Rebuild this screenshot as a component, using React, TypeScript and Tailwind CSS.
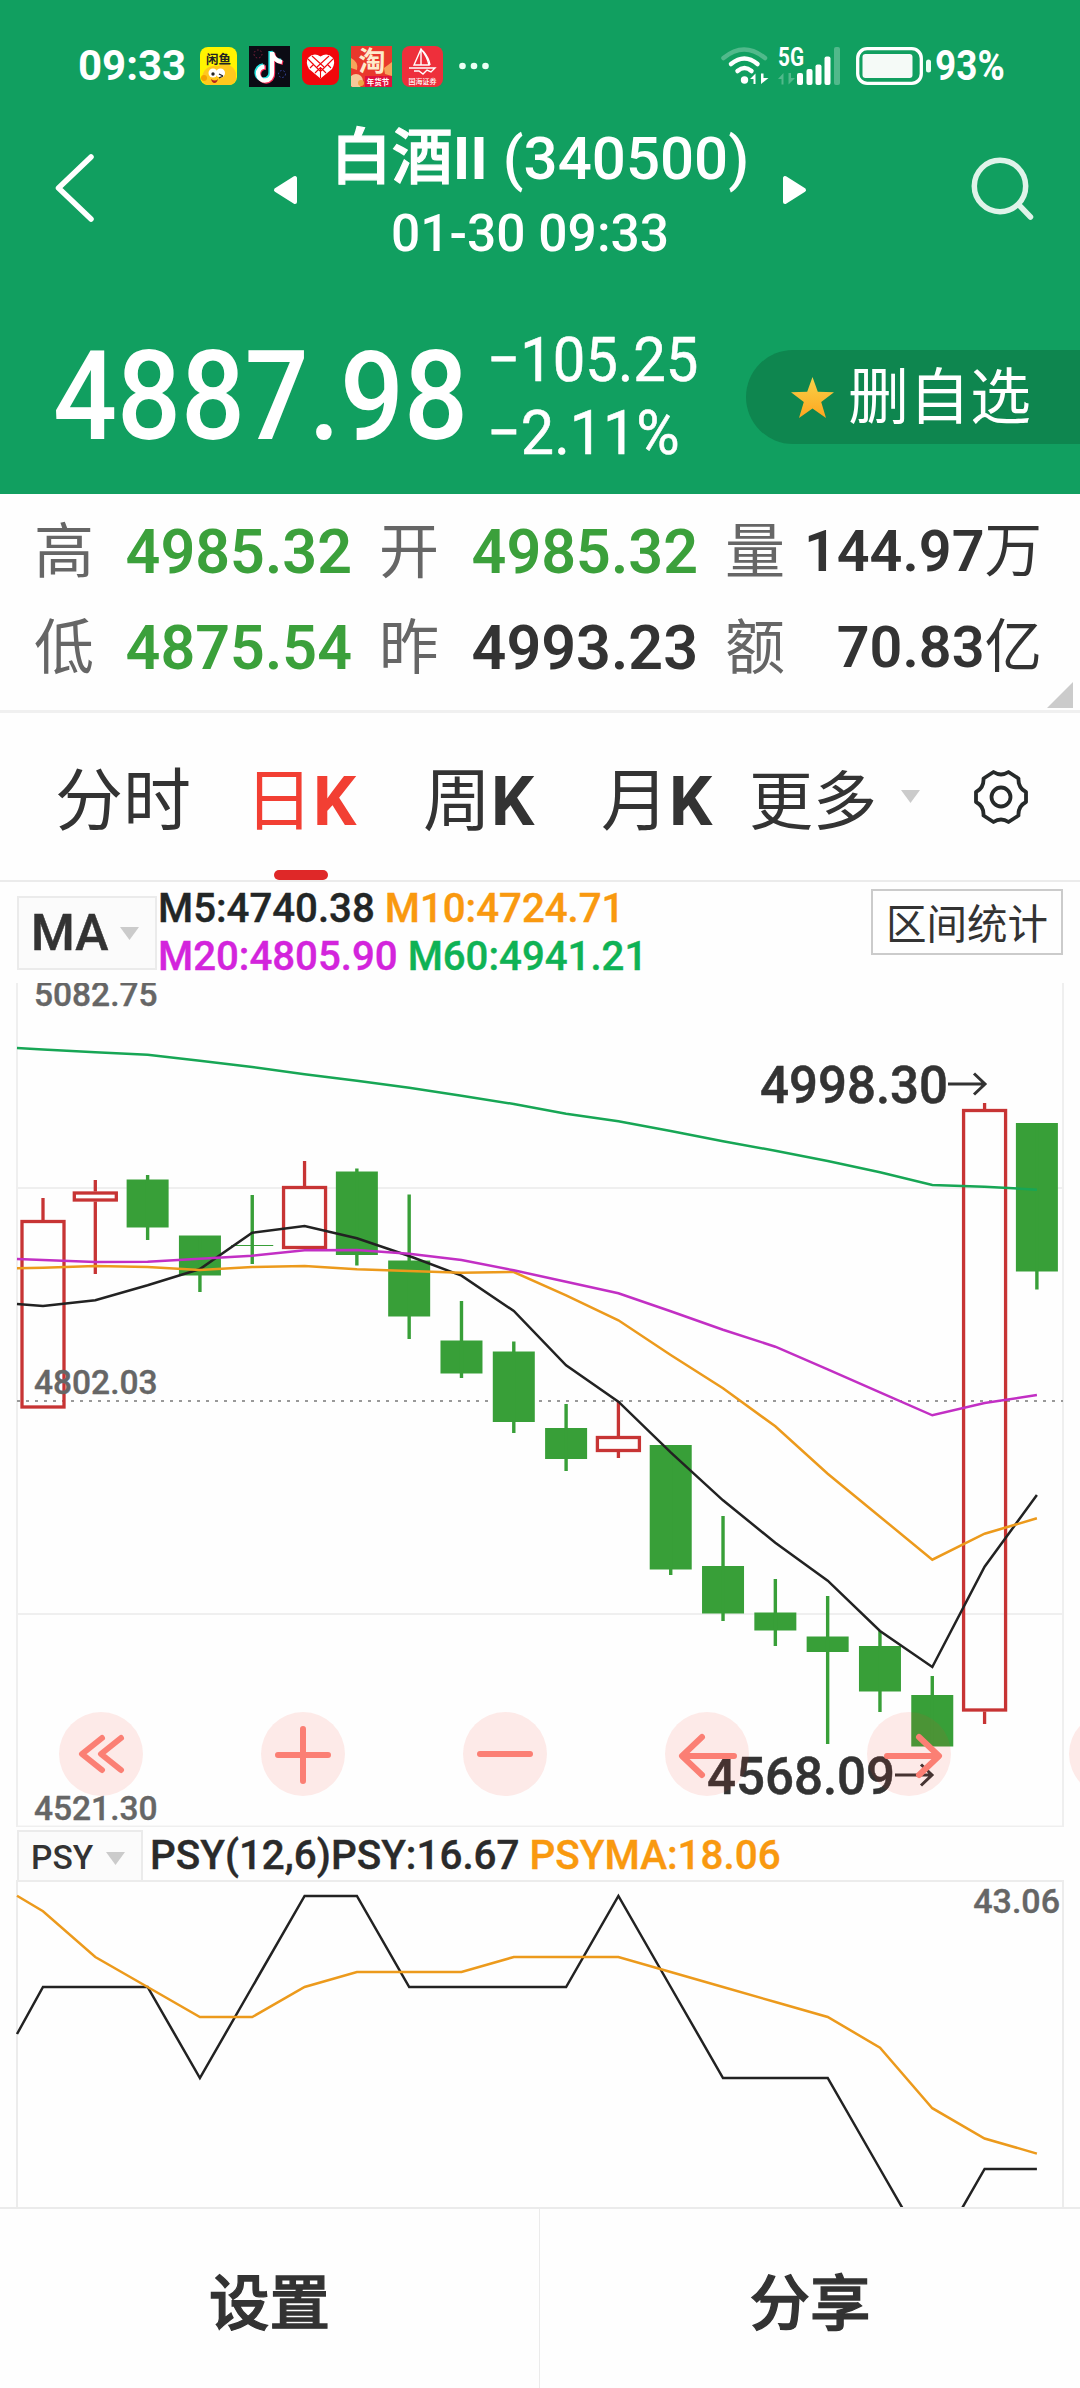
import type { ReactNode } from "react";

const GREEN = "#389f38";
const RED = "#c73434";

// x of candle i; the first one sits at 43
const cx = (i: number) => 43 + i * 52.31;

// up, high, body top, body bottom, low (chart pixels)
const CANDLES: [boolean, number, number, number, number][] = [
  [true, 1198, 1220, 1408.5, 1408],
  [true, 1180, 1191.5, 1201.5, 1274],
  [false, 1175, 1179.5, 1227.5, 1240],
  [false, 1236, 1235.5, 1275.5, 1292],
  [false, 1195, 1245, 1246, 1264],
  [true, 1161, 1186, 1249, 1249],
  [false, 1168.5, 1171.5, 1255, 1265.5],
  [false, 1194.5, 1260.5, 1316.5, 1339],
  [false, 1301, 1340.5, 1373.5, 1378],
  [false, 1341.5, 1351.5, 1422, 1433],
  [false, 1404, 1428, 1459, 1471],
  [true, 1401, 1436, 1452, 1458],
  [false, 1445, 1445, 1569.5, 1575],
  [false, 1516, 1566, 1613.5, 1621],
  [false, 1579, 1612.5, 1630.5, 1646],
  [false, 1596, 1636.5, 1652, 1744],
  [false, 1631, 1646, 1691.5, 1712],
  [false, 1676, 1695, 1746.5, 1746],
  [true, 1103, 1109, 1711.5, 1724],
  [false, 1123, 1123, 1271.5, 1289.5],
];

// every series starts with its value on the left edge of the chart
const MA60 = [1048, 1049.5, 1052.3, 1054.7, 1060.7, 1067, 1074.3, 1080.7, 1087.7, 1095.7, 1104, 1113.7, 1121.3, 1131, 1141.3, 1150.7, 1161, 1172.3, 1185, 1186.7, 1189.7];
const MA20 = [1259, 1260, 1262, 1261.7, 1258.7, 1255.7, 1250.3, 1250, 1253.7, 1260, 1270.3, 1281.7, 1293.3, 1311.3, 1329.7, 1346.7, 1369.3, 1392.3, 1415.3, 1403, 1395];
const MA10 = [1268.3, 1267.7, 1266, 1267, 1270, 1267, 1266, 1269.3, 1271, 1272.7, 1272, 1295.3, 1320.3, 1355, 1388.3, 1426.3, 1473.7, 1516.7, 1559.7, 1533.7, 1518.3];
const MA5 = [1304, 1306, 1300.3, 1285.3, 1269, 1232.7, 1226, 1238.3, 1256, 1275.7, 1311, 1365.3, 1401.7, 1452.3, 1500.3, 1542.7, 1580.7, 1631, 1667, 1566.7, 1495];
const PSY = [2034, 1987, 1987, 1987, 2078, 1987, 1896, 1896, 1987, 1987, 1987, 1987, 1896, 1987, 2078, 2078, 2078, 2169, 2260, 2169, 2169];
const PSYMA = [1895.7, 1911.2, 1957, 1987, 2017, 2017, 1987, 1972, 1972, 1972, 1957, 1957, 1957, 1972, 1987, 2002, 2017, 2047.6, 2108.2, 2138.5, 2153.6];

const toPoints = (ys: number[]) =>
  ys.map((y, i) => `${i === 0 ? 17 : cx(i - 1).toFixed(1)},${y}`).join(" ");

function Line({ ys, color }: { ys: number[]; color: string }) {
  return <polyline points={toPoints(ys)} fill="none" stroke={color} strokeWidth="2.500" />;
}

function Caret() {
  return (
    <svg width="19" height="13" viewBox="0 0 19 13">
      <path d="M0 0H19L9.5 13Z" fill="#cbcbcb" />
    </svg>
  );
}

function StatusBar() {
  return (
    <div className="flex h-[132px] items-center pl-[78px] text-[42px] font-bold leading-none">
      <span className="w-[122px]">09:33</span>
      <svg width="37" height="38" viewBox="0 0 37 38">
        <rect width="37" height="38" rx="8" fill="#fff400" />
        <path d="M2 33C2 20 12 18 18 19C28 14 34 20 36 26V33Q34 38 28 38H9Q4 38 2 33Z" fill="#ffc81e" />
        <circle cx="4" cy="31" r="3" fill="#f5a300" />
        <circle cx="13" cy="26" r="4.5" fill="#fff" />
        <circle cx="20.500" cy="26" r="4.500" fill="#fff" />
        <circle cx="13" cy="27" r="1.700" fill="#222" />
        <path d="M19 27L23 29M19 31L23 29" stroke="#222" strokeWidth="1.300" />
        <path d="M11 32Q15 35 18 32Q17 36 14.500 36Q12 36 11 32Z" fill="#b3261e" />
        <text x="18.500" y="16.500" fontSize="12.500" fontWeight="700" textAnchor="middle" fill="#222">闲鱼</text>
      </svg>
      <svg className="ml-3" width="41" height="41" viewBox="0 0 41 41">
        <rect width="41" height="41" fill="#0b0b14" />
        <g stroke="#8a2340" strokeWidth="1" strokeDasharray="1.500 2">
          <circle cx="9" cy="8" r="4" fill="none" />
          <circle cx="33" cy="28" r="3.500" fill="none" stroke="#3a4aa8" />
        </g>
        <g fill="none" strokeWidth="4.300">
          <path d="M21.500 5V26A7 7 0 1 1 14 19.500M21.500 5Q22.500 14 32 15" stroke="#25e5e0" />
          <path d="M24 7V28A7 7 0 1 1 17 21.500M24 7Q25 15 34 17" stroke="#fb2c56" />
          <path d="M23 6V27A7 7 0 1 1 15.500 20.500M23 6Q24 14.500 33 16" stroke="#fff" />
        </g>
      </svg>
      <svg className="ml-3" width="37" height="38" viewBox="0 0 37 38">
        <rect width="37" height="38" rx="8" fill="#f1070c" />
        <path d="M18.500 31.500L7 22Q3 15 6.500 10.500Q12 5 18.500 9.500Q25 5 30.500 10.500Q34 15 30 22Z" fill="#fff" />
        <path d="M6 12L18 24M10 9L22 20M31 12L19 24M27 9L15 20M18.500 20V31M8 21L12 17M29 21L25 17M13 26L18 21M24 26L19 21" stroke="#f1070c" strokeWidth="1.100" />
      </svg>
      <svg className="ml-3" width="41" height="41" viewBox="0 0 41 41">
        <rect width="41" height="41" fill="#e9382c" />
        <path d="M0 12Q8 16 6 24L0 22ZM33 22L41 16V30L34 28Z" fill="#f7a35b" />
        <circle cx="5" cy="35" r="7" fill="#f6c89a" />
        <circle cx="10" cy="37" r="3" fill="#f2a544" />
        <rect x="14" y="30" width="27" height="11" fill="#e0103c" />
        <text x="21" y="25" fontSize="27" fontWeight="700" textAnchor="middle" fill="#fdebcb">淘</text>
        <text x="27" y="38.500" fontSize="7.500" fontWeight="700" textAnchor="middle" fill="#fff">年货节</text>
      </svg>
      <svg className="ml-2.5" width="41" height="41" viewBox="0 0 41 41">
        <rect width="41" height="41" rx="8" fill="#ee2f3b" />
        <g fill="none" stroke="#fff" strokeWidth="1.400">
          <path d="M19 3L12 19H27Q25 10 19 3ZM19 3V19M7 22H33L29 26L25 24L21 28L17 25H12" />
          <path d="M21 5Q27 12 28 19" />
        </g>
        <text x="20.500" y="37.500" fontSize="7" fontWeight="500" textAnchor="middle" fill="#fff">国海证券</text>
      </svg>
      <svg className="ml-4" width="30" height="8" viewBox="0 0 30 8">
        <circle cx="3.500" cy="4" r="3.300" fill="#eafff4" />
        <circle cx="15" cy="4" r="3.300" fill="#eafff4" />
        <circle cx="26.500" cy="4" r="3.300" fill="#eafff4" />
      </svg>
      <svg className="ml-[232px]" width="48" height="40" viewBox="0 0 48 40" fill="none" stroke="#fff" strokeLinecap="round">
        <path d="M2.500 12Q23 -5 44 12" strokeWidth="4.500" opacity=".27" />
        <path d="M10 18Q23.500 7 36.500 18" strokeWidth="4.500" />
        <path d="M16.500 25Q23.500 19 30.500 25" strokeWidth="4.500" />
        <circle cx="23.500" cy="34" r="3.700" fill="#fff" stroke="none" />
        <path d="M29 33L34.500 27.500V38H32.500V33ZM40 27.500V38L47.500 32H42.500V27.500Z" fill="#fff" stroke="none" />
      </svg>
      <svg className="-mt-3 ml-[9px]" width="64" height="52" viewBox="0 -12 64 52" fill="#fff">
        <text x="0" y="19.500" fontSize="26" fontWeight="700" textLength="26" lengthAdjust="spacingAndGlyphs">5G</text>
        <path d="M0 33L5.500 27V38.500H3.500V33ZM10.500 27V38.500L17 32H13V27Z" opacity=".27" />
        <rect x="19" y="27" width="6" height="12" rx="2" />
        <rect x="28.500" y="23" width="6" height="16" rx="2" />
        <rect x="37.500" y="18.500" width="6" height="20.500" rx="2" />
        <rect x="46.500" y="10.500" width="6" height="28.500" rx="2" />
        <rect x="56" y="1" width="6" height="38" rx="2" opacity=".27" />
      </svg>
      <svg className="ml-3.5" width="76" height="38" viewBox="0 0 76 38">
        <rect x="1.700" y="1.700" width="63.600" height="34.600" rx="9.500" fill="none" stroke="#fff" strokeWidth="3.300" />
        <rect x="6.500" y="7" width="50" height="24" rx="3" fill="#f5faf7" />
        <rect x="70" y="12.500" width="5" height="13" rx="2.500" fill="#eafff4" />
      </svg>
      <span className="ml-[3px] inline-block origin-left scale-x-[.88]">93%</span>
    </div>
  );
}

function Header() {
  return (
    <header className="h-[494px] bg-[#119f60] text-white">
      <StatusBar />
      <div className="flex h-[124px] items-center pl-[54px]">
        <svg className="-mt-3" width="42" height="70" viewBox="0 0 42 70">
          <path d="M37 4L4.500 35L37 66" fill="none" stroke="#fff" strokeWidth="5.500" strokeLinecap="round" strokeLinejoin="round" />
        </svg>
        <svg className="ml-[177px] -mt-2" width="24" height="30" viewBox="0 0 24 30">
          <path d="M3 15L22 3V27Z" fill="#fff" stroke="#fff" strokeWidth="4" strokeLinejoin="round" />
        </svg>
        <div className="flex w-[486px] flex-col items-center whitespace-nowrap font-medium">
          <div className="text-[60px] leading-[78px]">
            <span className="text-[61px] [-webkit-text-stroke:1.2px_white]">白酒</span>
            <span className="font-bold">II</span> (340500)
          </div>
          <div className="mr-5 text-[51.5px] leading-[72px]">01-30 09:33</div>
        </div>
        <svg className="-mt-2" width="24" height="30" viewBox="0 0 24 30">
          <path d="M21 15L2 3V27Z" fill="#fff" stroke="#fff" strokeWidth="4" strokeLinejoin="round" />
        </svg>
        <svg className="-mt-3 ml-[164px]" width="64" height="64" viewBox="0 0 64 64" fill="none" stroke="#dff3e9" strokeWidth="5.500" strokeLinecap="round">
          <circle cx="29" cy="30" r="25.700" />
          <path d="M48 49L59.500 61" />
        </svg>
      </div>
      <div className="mt-[72px] flex h-[136px] items-center">
        <div className="w-[437px] shrink-0 pl-[53px] text-[125px] font-medium leading-none">
          <span className="inline-block origin-left scale-x-[.9]">4887.98</span>
        </div>
        <div className="w-[309px] shrink-0 pl-[50px] text-[62px] leading-[73px]">
          <div className="origin-left scale-x-[.935] whitespace-nowrap [-webkit-text-stroke:.6px_white]">−105.25</div>
          <div className="origin-left scale-x-[.955] whitespace-nowrap [-webkit-text-stroke:.6px_white]">−2.11%</div>
        </div>
        <div className="mt-0.5 flex h-[94px] flex-1 items-center rounded-l-full bg-[#0e864f] pl-[45px] text-[61px] leading-none">
          <svg width="43" height="41" viewBox="0 0 43 41">
            <defs>
              <linearGradient id="star" x2="0" y2="1">
                <stop offset="0" stopColor="#f7d34a" />
                <stop offset="1" stopColor="#ffa51f" />
              </linearGradient>
            </defs>
            <path d="M21.500 0L26.800 14.800L43 15.200L30.200 24.900L35 41L21.500 31.500L8 41L12.800 24.900L0 15.200L16.200 14.800Z" fill="url(#star)" />
          </svg>
          <span className="ml-3.5 mt-0.5">删自选</span>
        </div>
      </div>
    </header>
  );
}

function Stat({ label, children, tone }: { label: string; children: ReactNode; tone: string }) {
  return (
    <div className="flex items-center justify-between">
      <span className="mt-0.5 text-[60px] text-[#666]">{label}</span>
      <span className={tone}>{children}</span>
    </div>
  );
}

function Stats() {
  const up = "text-[61px] font-semibold text-[#3ba03b]";
  const flat = "text-[61px] font-semibold text-[#333]";
  const sum = "text-[57.5px] font-semibold text-[#333]";
  return (
    <div className="relative grid h-[219px] grid-cols-[318px_319px_317px] grid-rows-[96px_96px] gap-x-[27px] border-b-3 border-[#f0f0f0] pl-[34px] pt-[10px] leading-none">
      <Stat label="高" tone={up}>4985.32</Stat>
      <Stat label="开" tone={up}>4985.32</Stat>
      <Stat label="量" tone={sum}>144.97<span className="font-normal">万</span></Stat>
      <Stat label="低" tone={up}>4875.54</Stat>
      <Stat label="昨" tone={flat}>4993.23</Stat>
      <Stat label="额" tone={sum}>70.83<span className="font-normal">亿</span></Stat>
      <svg className="absolute bottom-0.5 right-[7px]" width="26" height="26" viewBox="0 0 26 26">
        <path d="M26 0V26H0Z" fill="#cbcbcb" />
      </svg>
    </div>
  );
}

function Tabs() {
  return (
    <nav className="flex h-[169px] items-stretch border-b-2 border-[#ebebeb] pl-[55px] text-[68px] leading-[179px] text-[#333]">
      <span className="w-[190px]">分时</span>
      <span className="flex w-[178px] flex-col text-[#f23f33]">
        <span className="h-[157px]">日<b>K</b></span>
        <i className="ml-[29px] h-2.5 w-[54px] rounded-full bg-[#df2828]" />
      </span>
      <span className="w-[178px]">周<b>K</b></span>
      <span className="w-[148px]">月<b>K</b></span>
      <span className="w-[152px] text-[64px]">更多</span>
      <span className="flex items-center"><Caret /></span>
      <span className="ml-[51px] flex items-center">
        <svg width="60" height="60" viewBox="-30 -30 60 60" fill="none" stroke="#262a2a" strokeWidth="3.800" strokeLinejoin="round">
          <path d="M-7.500 -25Q0 -20 7.500 -25L17.500 -18.500Q17 -9 25 -5V5Q17 9 17.500 18.500L7.500 25Q0 20 -7.500 25L-17.500 18.500Q-17 9 -25 5V-5Q-17 -9 -17.500 -18.500Z" />
          <circle r="9.500" />
        </svg>
      </span>
    </nav>
  );
}

function MaLegend() {
  return (
    <div className="flex h-[101px] items-start pl-[17px]">
      <div className="mt-3.5 flex h-[74px] w-[140px] items-center justify-between border-2 border-[#ebebeb] bg-[#fbfbfb] pl-3 pr-4 text-[50px] font-medium leading-none text-[#333] [-webkit-text-stroke:.5px]">
        MA
        <Caret />
      </div>
      <div className="ml-px w-[713px] whitespace-nowrap pt-[3px] text-[40.2px] font-medium leading-[48px] [-webkit-text-stroke:.4px]">
        <div className="text-[#222626]">
          M5:4740.38 <span className="text-[#f9990f]">M10:4724.71</span>
        </div>
        <div className="text-[#d324dc]">
          M20:4805.90 <span className="text-[#0fb255]">M60:4941.21</span>
        </div>
      </div>
      <div className="mt-[7px] flex h-[66px] w-48 items-center justify-center border-2 border-[#cbcbcb] pt-1.5 text-[40.5px] leading-none text-[#333]">
        区间统计
      </div>
    </div>
  );
}

function KLine() {
  return (
    <svg className="block" width="1080" height="844" viewBox="0 983 1080 844">
      <g fill="#efefef">
        <rect x="16" y="983" width="2" height="844" />
        <rect x="1062" y="983" width="2" height="844" />
        <rect x="17" y="1187" width="1046" height="2" />
        <rect x="17" y="1613" width="1046" height="2" />
        <rect x="17" y="1825.500" width="1046" height="1.500" />
      </g>
      <path d="M17 1401H1063" stroke="#999" strokeWidth="2" strokeDasharray="3 6" />
      {CANDLES.map(([up, high, top, bottom, low], i) => {
        const x = cx(i);
        return up ? (
          <g key={i} fill="none" stroke={RED} strokeWidth="3.300">
            <rect x={x - 21} y={top + 1.5} width="42" height={bottom - top - 3} />
            <path d={`M${x} ${high}V${top}M${x} ${bottom}V${Math.max(low, bottom)}`} />
          </g>
        ) : (
          <g key={i} fill={GREEN}>
            <rect x={x - 21} y={top} width="42" height={bottom - top} />
            <rect x={x - 1.7} y={high} width="3.400" height={Math.max(low - high, 0)} />
          </g>
        );
      })}
      <Line ys={MA5} color="#222" />
      <Line ys={MA10} color="#ec9a1c" />
      <Line ys={MA20} color="#c22fc4" />
      <Line ys={MA60} color="#17a655" />
      <g fontSize="33.500" fontWeight="500" fill="#666" stroke="#666" strokeWidth=".4">
        <text x="34" y="1005.500">5082.75</text>
        <text x="34" y="1394">4802.03</text>
        <text x="34" y="1820">4521.30</text>
      </g>
      <g fontSize="51" fontWeight="500" fill="#333" stroke="#333" strokeWidth=".5">
        <text x="760" y="1103">4998.30</text>
        <text x="707" y="1794">4568.09</text>
      </g>
      <g fill="none" stroke="#333" strokeWidth="3">
        <path d="M948 1084H984M974 1073.500L985 1084L974 1094.500" />
        <path d="M895 1775H931M921 1764.500L932 1775L921 1785.500" />
      </g>
    </svg>
  );
}

// glyphs of the floating buttons, drawn around their own centre
const TOOLS = [
  "M1 -16L-19 0L1 16M20 -16L0 0L20 16",
  "M-25 1H25M0 -25V27",
  "M-25 0H25",
  "M27 2H-24M-5 -17L-25 2L-5 21",
  "M-22 2H29M10 -17L30 2L10 21",
  "M-25 0H25",
];

function Toolbar() {
  return (
    <div className="absolute bottom-[31px] left-[59px] right-0 flex gap-[118px] overflow-hidden">
      {TOOLS.map((d, i) => (
        <svg key={i} className="shrink-0 rounded-full bg-[#f83c28]/10" width="84" height="84" viewBox="-42 -42 84 84">
          <path d={d} fill="none" stroke="#fb7f74" strokeWidth="6" strokeLinecap="round" strokeLinejoin="round" />
        </svg>
      ))}
    </div>
  );
}

function PsyPanel() {
  return (
    <>
      <div className="flex h-[53px] items-end pl-[17px]">
        <div className="flex h-[50px] w-[126px] items-center justify-between border-2 border-b-0 border-[#ebebeb] bg-[#fbfbfb] pl-3 pr-4 pt-1 text-[33.5px] font-medium leading-none text-[#333]">
          PSY
          <Caret />
        </div>
        <div className="ml-[7px] whitespace-nowrap text-[40.4px] font-medium leading-[48px] text-[#2a2a2a] [-webkit-text-stroke:.4px]">
          PSY(12,6)PSY:16.67 <span className="text-[#f9990f]">PSYMA:18.06</span>
        </div>
      </div>
      <svg className="block" width="1080" height="327" viewBox="0 1880 1080 327">
        <g fill="#ececec">
          <rect x="16" y="1880" width="1048" height="2" />
          <rect x="16" y="1880" width="2" height="327" />
          <rect x="1062" y="1880" width="2" height="327" />
        </g>
        <Line ys={PSY} color="#222" />
        <Line ys={PSYMA} color="#ec9a1c" />
        <text x="1060" y="1913" fontSize="34" fontWeight="500" textAnchor="end" fill="#666" stroke="#666" strokeWidth=".4">43.06</text>
      </svg>
    </>
  );
}

export default function App() {
  return (
    <div className="h-[2388px] w-[1080px] overflow-hidden bg-[#fefefe] font-['Roboto','Noto_Sans_CJK_SC',sans-serif]">
      <Header />
      <Stats />
      <Tabs />
      <MaLegend />
      <div className="relative">
        <KLine />
        <Toolbar />
      </div>
      <PsyPanel />
      <footer className="grid h-[181px] grid-cols-2 border-t-2 border-[#ebebeb] text-center text-[60.5px] font-medium leading-[191px] text-[#333] [-webkit-text-stroke:1.3px]">
        <span className="border-r border-[#ebebeb]">设置</span>
        <span>分享</span>
      </footer>
    </div>
  );
}
